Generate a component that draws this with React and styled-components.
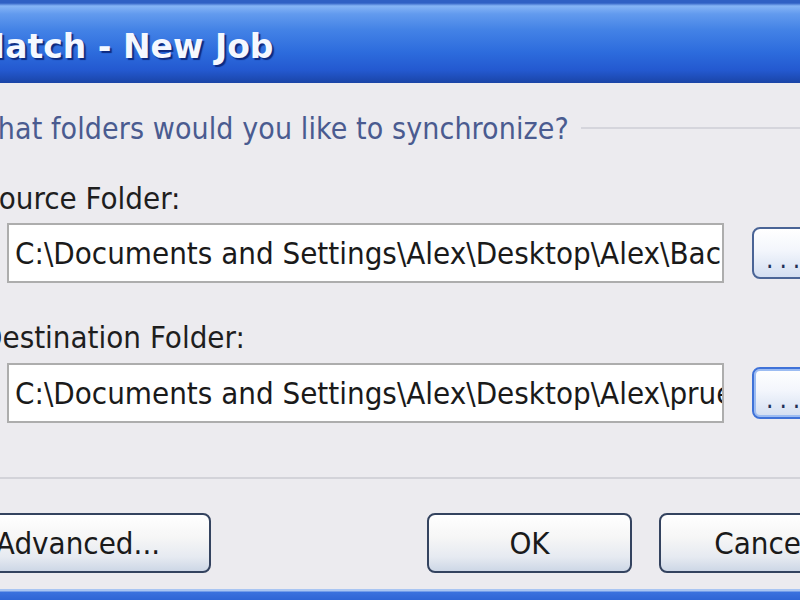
import React from "react";
import styled, { createGlobalStyle } from "styled-components";

const GlobalStyle = createGlobalStyle`
  html, body {
    margin: 0;
    padding: 0;
    background: #ecebef;
    overflow: hidden;
  }
`;

const Viewport = styled.div`
  width: 800px;
  height: 600px;
  overflow: hidden;
`;

const Window = styled.div`
  width: 900px;
  margin-left: -20px;
  display: flex;
  flex-direction: column;
  background: #ecebef;
  font-family: "DejaVu Sans", sans-serif;
  font-stretch: semi-condensed;
`;

const TitleBar = styled.div`
  height: 83px;
  display: flex;
  align-items: center;
  background: linear-gradient(
    to bottom,
    #2f60c4 0px,
    #2f60c4 3px,
    #86b5f6 6px,
    #629aee 14px,
    #4382e6 30px,
    #2d6cdd 52px,
    #2459d0 70px,
    #1d4bb4 79px,
    #1a44a6 83px
  );
`;

const Title = styled.div`
  margin-left: -96px;
  margin-top: 10px;
  font-family: "DejaVu Sans", sans-serif;
  font-stretch: normal;
  font-weight: 700;
  font-size: 33px;
  color: #f4f8ff;
  text-shadow: 2px 2px 1px #0c2a80;
  white-space: nowrap;
`;

const Body = styled.div`
  display: flex;
  flex-direction: column;
  padding: 27px 0 0 27px;
`;

const HeadingRow = styled.div`
  display: flex;
  align-items: center;
  height: 36px;
  margin-left: -36px;
`;

const Heading = styled.div`
  font-size: 30px;
  letter-spacing: 0.1px;
  color: #4a5b90;
  white-space: nowrap;
`;

const HeadLine = styled.div`
  flex: 1;
  height: 2px;
  margin-left: 12px;
  background: #d5d5dc;
`;

const Label = styled.div`
  font-size: 31px;
  line-height: 36px;
  color: #1e1e1e;
  margin-left: -26px;
  margin-top: ${({ $top }) => $top}px;
  white-space: nowrap;
`;

const FieldRow = styled.div`
  display: flex;
  align-items: center;
  gap: 28px;
  margin-top: ${({ $top }) => $top}px;
`;

const PathBox = styled.div`
  width: 717px;
  height: 60px;
  box-sizing: border-box;
  border: 2px solid #adadad;
  background: #ffffff;
  display: flex;
  align-items: center;
  padding-left: 6px;
  overflow: hidden;
  font-size: 31px;
  color: #1a1a1a;
  white-space: nowrap;
`;

const BrowseButton = styled.div`
  width: 64px;
  height: 52px;
  box-sizing: border-box;
  border-radius: 8px;
  border: 2px solid ${({ $focused }) => ($focused ? "#3f72d8" : "#4a6496")};
  box-shadow: ${({ $focused }) =>
    $focused ? "inset 0 0 0 2px #9cbcf2" : "none"};
  background: linear-gradient(to bottom, #ffffff 0%, #f3f6fc 45%, #d3def1 100%);
  display: flex;
  align-items: flex-end;
  justify-content: flex-start;
  padding: 0 0 8px 12px;
  font-size: 26px;
  line-height: 20px;
  letter-spacing: 6px;
  color: #1f2f55;
`;

const Divider = styled.div`
  height: 2px;
  background: #d3d3d9;
  margin: 54px 0 0 -27px;
`;

const ButtonRow = styled.div`
  display: flex;
  margin-top: 34px;
`;

const Button = styled.div`
  width: ${({ $w }) => $w}px;
  height: 60px;
  box-sizing: border-box;
  margin-left: ${({ $ml }) => $ml}px;
  border: 2px solid #34435f;
  border-radius: 8px;
  background: linear-gradient(
    to bottom,
    #ffffff 0%,
    #f6f6f6 40%,
    #e6eaf1 75%,
    #cdd7e6 100%
  );
  display: flex;
  align-items: center;
  justify-content: center;
  font-size: 31px;
  color: #1a1a1a;
  white-space: nowrap;
`;

const BottomFrame = styled.div`
  height: 14px;
  margin-top: 16px;
  background: linear-gradient(
    to bottom,
    #a9c5f2 0px,
    #a9c5f2 2px,
    #3b72de 3px,
    #2a60d2 14px
  );
`;

const App = () => {
  return (
    <Viewport>
      <GlobalStyle />
      <Window>
        <TitleBar>
          <Title>SyncMatch - New Job</Title>
        </TitleBar>
        <Body>
          <HeadingRow>
            <Heading>What folders would you like to synchronize?</Heading>
            <HeadLine />
          </HeadingRow>
          <Label $top={34}>Source Folder:</Label>
          <FieldRow $top={7}>
            <PathBox>C:\Documents and Settings\Alex\Desktop\Alex\Backup</PathBox>
            <BrowseButton>...</BrowseButton>
          </FieldRow>
          <Label $top={36}>Destination Folder:</Label>
          <FieldRow $top={8}>
            <PathBox>C:\Documents and Settings\Alex\Desktop\Alex\prueba</PathBox>
            <BrowseButton $focused>...</BrowseButton>
          </FieldRow>
          <Divider />
          <ButtonRow>
            <Button $w={266} $ml={-62}>Advanced...</Button>
            <Button $w={205} $ml={216}>OK</Button>
            <Button $w={205} $ml={27}>Cancel</Button>
          </ButtonRow>
        </Body>
        <BottomFrame />
      </Window>
    </Viewport>
  );
};

export default App;
